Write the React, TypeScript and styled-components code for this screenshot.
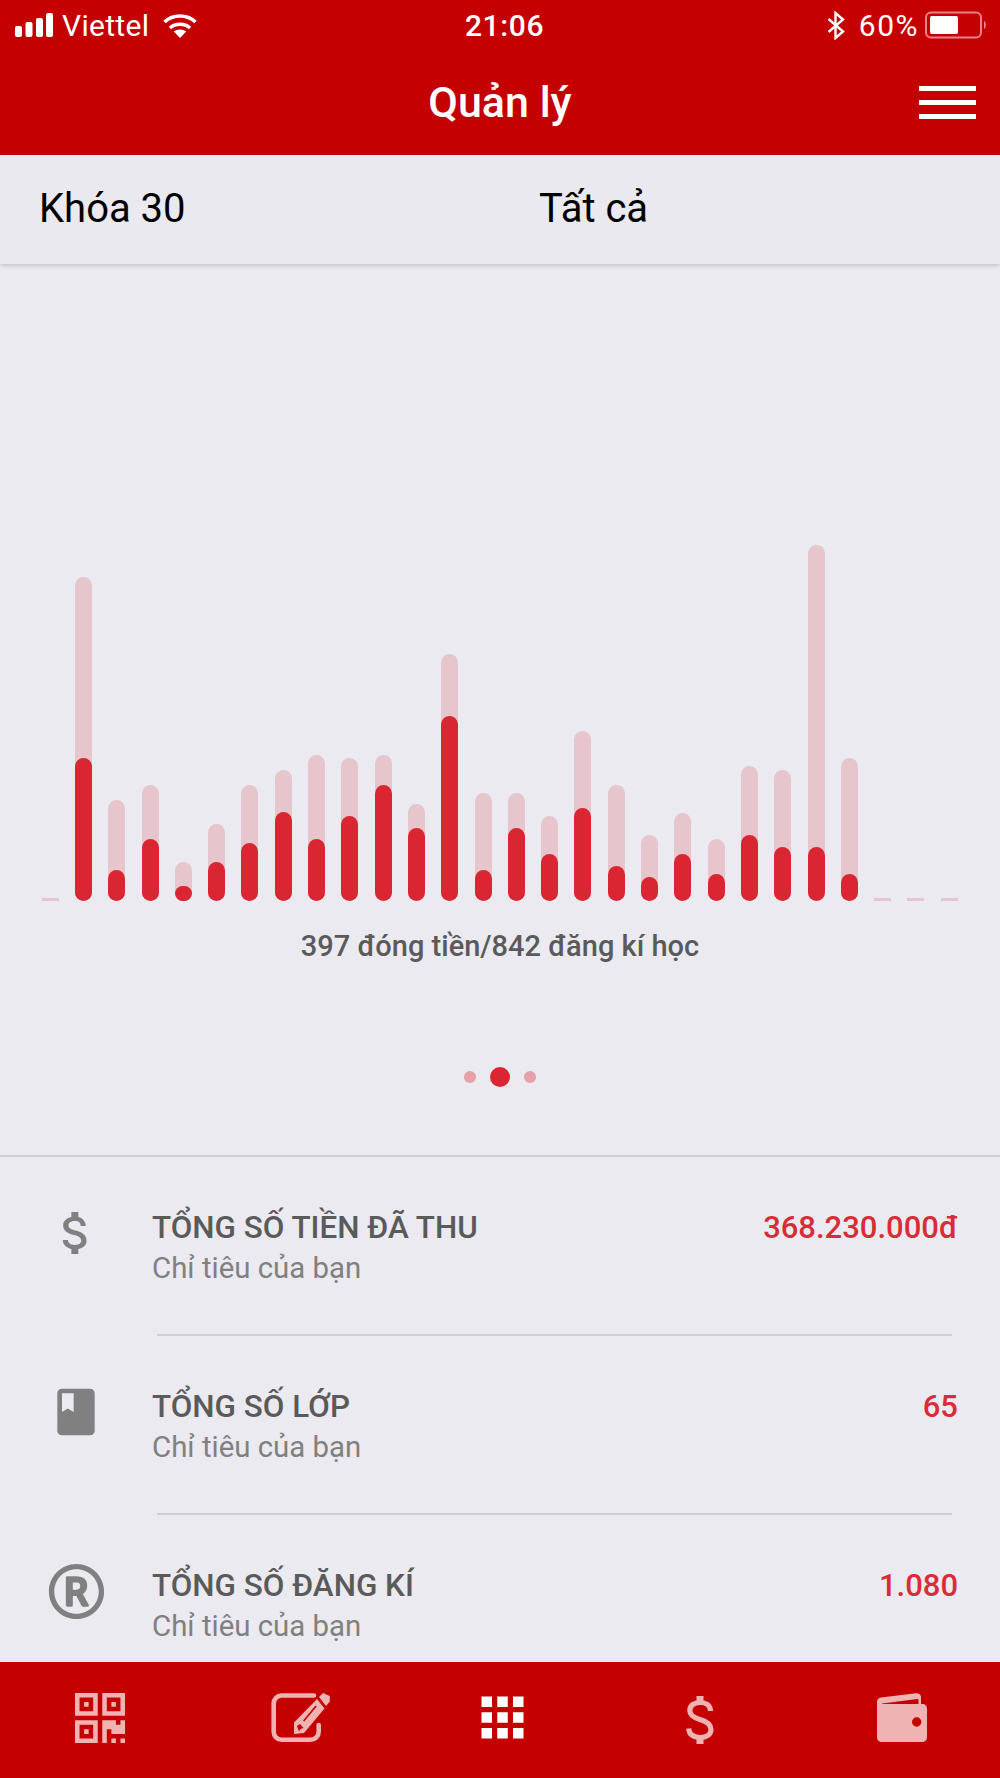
import React from "react";
import styled, { createGlobalStyle } from "styled-components";
import { FaRegRegistered } from "react-icons/fa";
import { MdApps, MdAttachMoney, MdBook } from "react-icons/md";

const Global = createGlobalStyle`
  html, body { margin: 0; padding: 0; background: #ebeaf0; }
  body { font-family: Roboto, "Noto Sans", sans-serif; }
`;

const Page = styled.div`
  width: 1000px;
  height: 1778px;
  display: flex;
  flex-direction: column;
  overflow: hidden;
  background: #ebeaf0;
`;

const Header = styled.header`
  background: #c40000;
  color: #fff;
  height: 155px;
  flex: none;
`;

const StatusBar = styled.div`
  height: 50px;
  display: grid;
  grid-template-columns: 1fr auto 1fr;
  align-items: center;
  padding: 0 12px 0 15px;
  font-size: 30px;
`;

const StatusLeft = styled.div`
  display: flex;
  align-items: center;
`;

const StatusRight = styled.div`
  display: flex;
  align-items: center;
  justify-content: flex-end;
`;

const Carrier = styled.span`
  margin: 0 14px 0 9px;
  letter-spacing: 0.3px;
`;

const Clock = styled.span`
  margin-left: 6px;
  font-weight: 500;
  letter-spacing: 0.6px;
`;

const Percent = styled.span`
  margin: 0 6px 0 14px;
  letter-spacing: 1.5px;
`;

const NavBar = styled.div`
  height: 105px;
  box-sizing: border-box;
  padding: 0 24px;
  display: grid;
  grid-template-columns: 1fr auto 1fr;
  align-items: center;
`;

const Title = styled.h1`
  grid-column: 2;
  margin: -2px 0 0;
  font-size: 43px;
  font-weight: 500;
`;

const Burger = styled.div`
  grid-column: 3;
  justify-self: end;
  width: 57px;
  height: 33px;
  display: flex;
  flex-direction: column;
  justify-content: space-between;
`;

const BurgerLine = styled.span`
  display: block;
  height: 5px;
  background: #fff;
`;

const FilterBar = styled.div`
  flex: none;
  height: 109px;
  box-sizing: border-box;
  padding: 0 0 3px 39px;
  display: grid;
  grid-template-columns: 500px 1fr;
  align-items: center;
  background: #e9e9ef;
  font-size: 40px;
  color: #000;
  box-shadow: 0 2px 4px rgba(0, 0, 0, 0.16);
  position: relative;
`;

const ChartSection = styled.section`
  flex: none;
  height: 891px;
  border-bottom: 2px solid #cfcfd3;
  display: flex;
  flex-direction: column;
`;

const Bars = styled.div`
  margin-top: 281px;
  height: 356px;
  padding: 0 42px 0 41.7px;
  display: flex;
  justify-content: space-between;
  align-items: flex-end;
`;

const Track = styled.div<{ $h: number }>`
  width: 17px;
  height: ${(p) => p.$h}px;
  border-radius: 8.5px;
  background: #e6c5cc;
  display: flex;
  align-items: flex-end;
`;

const Fill = styled.div<{ $h: number }>`
  width: 100%;
  height: ${(p) => p.$h}px;
  border-radius: 8.5px;
  background: #d92632;
`;

const Dash = styled.div`
  width: 17px;
  height: 3px;
  background: #e8c4cc;
`;

const Caption = styled.p`
  margin: 27px 0 0;
  line-height: 36px;
  text-align: center;
  font-size: 29px;
  font-weight: 500;
  color: #5a5a5a;
`;

const Pager = styled.div`
  margin-top: 103px;
  height: 20px;
  display: flex;
  justify-content: center;
  align-items: center;
  gap: 14px;
`;

const PagerDot = styled.span<{ $active?: boolean }>`
  width: ${(p) => (p.$active ? 20 : 12)}px;
  height: ${(p) => (p.$active ? 20 : 12)}px;
  border-radius: 50%;
  background: ${(p) => (p.$active ? "#da2632" : "#e5a0a8")};
`;

const List = styled.div`
  flex: 1;
  min-height: 0;
  overflow: hidden;
`;

const Row = styled.div`
  height: 177px;
  box-sizing: border-box;
  padding: 52px 42px 0 0;
  display: grid;
  grid-template-columns: 152px 1fr auto;
  align-items: start;
`;

const IconSlot = styled.div`
  height: 56px;
  margin-top: -4px;
  display: flex;
  align-items: center;
  justify-content: center;
  color: #808080;
`;

const RowTitle = styled.div`
  font-size: 31.4px;
  line-height: 38px;
  font-weight: 500;
  color: #5a5a5a;
`;

const RowSub = styled.div`
  margin-top: 3px;
  font-size: 29.4px;
  line-height: 36px;
  color: #808080;
`;

const RowValue = styled.div`
  font-size: 31px;
  line-height: 38px;
  font-weight: 500;
  color: #da2c38;
`;

const Separator = styled.hr`
  border: 0;
  height: 2px;
  margin: 0 48px 0 157px;
  background: #cfcfd3;
`;

const TabBar = styled.nav`
  flex: none;
  height: 116px;
  box-sizing: border-box;
  padding-bottom: 5px;
  background: #c40000;
  display: grid;
  grid-template-columns: repeat(5, 1fr);
  align-items: center;
  justify-items: center;
`;

const Tab = styled.div<{ $active?: boolean; $shift?: number; $drop?: number }>`
  display: flex;
  margin-left: ${(p) => p.$shift ?? 0}px;
  margin-top: ${(p) => p.$drop ?? 0}px;
  color: ${(p) => (p.$active ? "#fff" : "#f0b3b3")};
`;

const WifiIcon = () => (
  <svg width="34" height="25" viewBox="0 0 34 25" fill="none" stroke="#fff" strokeWidth="3.6">
    <path d="M1.5 9 C 10 1, 24 1, 32.5 9" />
    <path d="M7 15 C 12.5 10, 21.5 10, 27 15" />
    <path d="M17 25 L10.8 18.6 C 14 15.8, 20 15.8, 23.2 18.6 Z" fill="#fff" stroke="none" />
  </svg>
);

const SignalIcon = () => (
  <svg width="38" height="24" viewBox="0 0 38 24" fill="#fff">
    <rect x="0" y="13" width="7" height="11" rx="2" />
    <rect x="10.5" y="9" width="7" height="15" rx="2" />
    <rect x="21" y="5" width="7" height="19" rx="2" />
    <rect x="31" y="0" width="7" height="24" rx="2" />
  </svg>
);

const BluetoothIcon = () => (
  <svg width="18" height="29" viewBox="0 0 18 29" fill="none" stroke="#fff" strokeWidth="2.4">
    <path d="M1.5 8 L16 20.5 L8.5 27 V2 L16 8.5 L1.5 21" />
  </svg>
);

const BatteryIcon = () => (
  <svg width="63" height="28" viewBox="0 0 63 28">
    <rect x="1" y="1.5" width="55" height="25" rx="5" fill="none" stroke="#e8838a" strokeWidth="2" />
    <rect x="5" y="5" width="28" height="18" rx="2" fill="#fff" />
    <path d="M59 10 C 61.5 11, 61.5 17, 59 18 Z" fill="#e8838a" />
  </svg>
);

const QrIcon = () => (
  <svg width="50" height="50" viewBox="192 256 1408 1408" fill="currentColor">
    <path d="M576 1280v128h-128v-128h128zm0-768v128h-128v-128h128zm768 0v128h-128v-128h128zm-1024 1023h384v-383h-384v383zm0-767h384v-384h-384v384zm768 0h384v-384h-384v384zm-256 256v640h-640v-640h640zm512 512v128h-128v-128h128zm256 0v128h-128v-128h128zm0-512v384h-384v-128h-128v384h-128v-640h384v128h128v-128h128zm-768-768v640h-640v-640h640zm768 0v640h-640v-640h640z" />
  </svg>
);

const ComposeIcon = () => (
  <svg width="59" height="49" viewBox="0 0 59 49" fill="none">
    <path
      d="M43 2.5 H10.5 A8 8 0 0 0 2.7 10.5 V38.7 A8 8 0 0 0 10.5 46.7 H39.7 A8 8 0 0 0 47.7 38.7 V32"
      stroke="currentColor"
      strokeWidth="4.6"
      strokeLinecap="round"
    />
    <path
      fill="currentColor"
      fillRule="evenodd"
      d="M48 4 L52 0 L58.8 3 V8.6 L55 13 Z M46 6 L53.5 15.5 L33 40 L23 41 V29.5 Z M32 27.5 L44.5 12.5 L45.8 13.6 L33.3 28.6 Z M26 33 L29 31 L32.5 35 L29.5 36 L28 38.5 Z"
    />
  </svg>
);

const TabDollarIcon = () => (
  <svg width="28" height="48" viewBox="0 0 28 48" fill="none">
    <rect x="10.5" y="0" width="7" height="7" fill="currentColor" />
    <rect x="10.5" y="41" width="7" height="7" fill="currentColor" />
    <path
      d="M24.5 15 C24.5 9.5 20 6.5 14 6.5 C8 6.5 3.8 9.5 3.8 14.5 C3.8 20 9 22 14 23.5 C20 25.2 25 27.5 25 33.5 C25 38.5 20.3 41.5 14 41.5 C7.7 41.5 3 38.5 2.7 32.5"
      stroke="currentColor"
      strokeWidth="5.2"
    />
  </svg>
);

const WalletIcon = () => (
  <svg width="50" height="49" viewBox="0 0 50 49" fill="currentColor">
    <path
      fillRule="evenodd"
      d="M0 9 C0 6.5 1.5 5 4 4.5 L39 0.2 C42 0 44 1.5 44 4 V11 H41.5 V7 C41.5 6.3 41 6 40.5 6 L5 10.5 V11 H45 C48.5 11 50 13 50 16 V44 C50 47.5 48 49 45 49 H5 C2 49 0 47.5 0 44 Z M44.4 29 A4.7 4.7 0 1 0 35 29 A4.7 4.7 0 1 0 44.4 29 Z"
    />
  </svg>
);

const bars: [number, number][] = [
  [324, 143], [101, 31], [116, 62], [39, 15], [77, 39], [116, 58], [131, 89], [146, 62],
  [143, 85], [146, 116], [97, 73], [247, 185], [108, 31], [108, 73], [85, 47], [170, 93],
  [116, 35], [66, 24], [88, 47], [62, 27], [135, 66], [131, 54], [356, 54], [143, 27],
];

const rows = [
  { title: "TỔNG SỐ TIỀN ĐÃ THU", value: "368.230.000đ", icon: <MdAttachMoney size={56} /> },
  { title: "TỔNG SỐ LỚP", value: "65", icon: <MdBook size={56} /> },
  { title: "TỔNG SỐ ĐĂNG KÍ", value: "1.080", icon: <FaRegRegistered size={57} /> },
];

export default function App() {
  return (
    <Page>
      <Global />
      <Header>
        <StatusBar>
          <StatusLeft>
            <SignalIcon />
            <Carrier>Viettel</Carrier>
            <WifiIcon />
          </StatusLeft>
          <Clock>21:06</Clock>
          <StatusRight>
            <BluetoothIcon />
            <Percent>60%</Percent>
            <BatteryIcon />
          </StatusRight>
        </StatusBar>
        <NavBar>
          <Title>Quản lý</Title>
          <Burger>
            <BurgerLine />
            <BurgerLine />
            <BurgerLine />
          </Burger>
        </NavBar>
      </Header>
      <FilterBar>
        <span>Khóa 30</span>
        <span>Tất cả</span>
      </FilterBar>
      <ChartSection>
        <Bars>
          <Dash />
          {bars.map(([total, paid], i) => (
            <Track key={i} $h={total}>
              <Fill $h={paid} />
            </Track>
          ))}
          <Dash />
          <Dash />
          <Dash />
        </Bars>
        <Caption>397 đóng tiền/842 đăng kí học</Caption>
        <Pager>
          <PagerDot />
          <PagerDot $active />
          <PagerDot />
        </Pager>
      </ChartSection>
      <List>
        {rows.map((r, i) => (
          <React.Fragment key={r.title}>
            {i > 0 && <Separator />}
            <Row>
              <IconSlot>{r.icon}</IconSlot>
              <div>
                <RowTitle>{r.title}</RowTitle>
                <RowSub>Chỉ tiêu của bạn</RowSub>
              </div>
              <RowValue>{r.value}</RowValue>
            </Row>
          </React.Fragment>
        ))}
      </List>
      <TabBar>
        <Tab><QrIcon /></Tab>
        <Tab><ComposeIcon /></Tab>
        <Tab $active $shift={4}><MdApps size={63} /></Tab>
        <Tab $drop={5}><TabDollarIcon /></Tab>
        <Tab $shift={4}><WalletIcon /></Tab>
      </TabBar>
    </Page>
  );
}
